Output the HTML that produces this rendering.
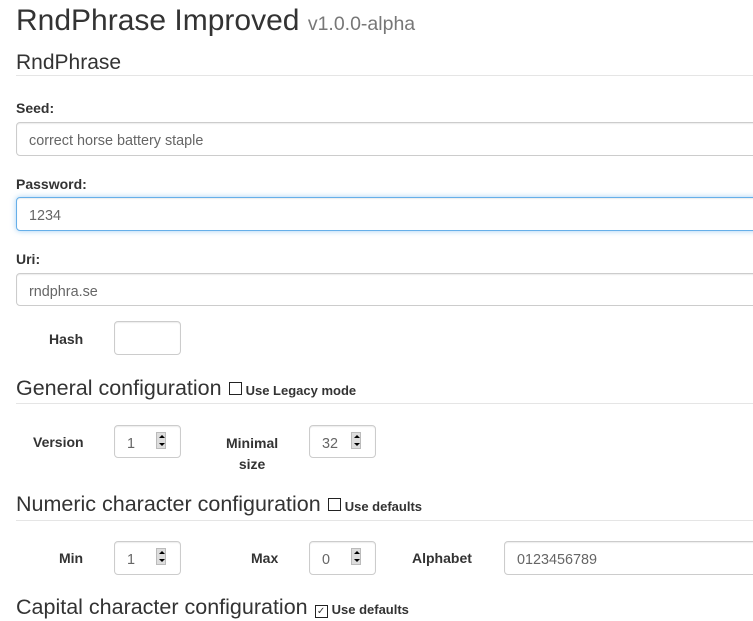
<!DOCTYPE html>
<html><head><meta charset="utf-8"><style>
body{margin:0;width:753px;height:621px;overflow:hidden;background:#fff;font-family:"Liberation Sans",sans-serif;color:#333;position:relative}
.a{position:absolute;white-space:nowrap}
.h1{font-size:30px;line-height:30px;left:16px;top:6px}
.h1 small{font-size:19.5px;color:#777}
.h{font-size:21.5px;line-height:22px;left:16px}
.hr{position:absolute;left:16px;right:0;height:1px;background:#e5e5e5}
.lb{font-weight:bold;font-size:14px}
.in{position:absolute;border:1px solid #ccc;border-radius:4px;box-sizing:border-box;font-size:14.4px;color:#666;padding-left:12px;padding-top:3px;line-height:31px;box-shadow:inset 0 1px 1px rgba(0,0,0,.075);background:#fff}
.cb{display:inline-block;width:11px;height:11px;border:1px solid #222;vertical-align:0px;margin:0 4px 0 7px;font-size:10px;line-height:11px;text-align:center}
.cbl{font-size:13px;font-weight:bold}
.sp{position:absolute;right:14px;top:6px;width:10px;height:17px;background:#ddd;border:1px solid #bbb;box-sizing:border-box}
.sp:before{content:"";position:absolute;left:2px;top:2px;border:3px solid transparent;border-bottom:3px solid #000;border-top:0}
.sp:after{content:"";position:absolute;left:2px;bottom:2px;border:3px solid transparent;border-top:3px solid #000;border-bottom:0}
</style></head><body>
<div class="a h1">RndPhrase Improved <small>v1.0.0-alpha</small></div>
<div class="a h" style="top:52px;font-size:21px">RndPhrase</div>
<div class="hr" style="top:75px"></div>
<div class="a lb" style="left:16px;top:100px">Seed:</div>
<div class="in" style="left:16px;top:122px;width:760px;height:34px">correct horse battery staple</div>
<div class="a lb" style="left:16px;top:176px">Password:</div>
<div class="in" style="left:16px;top:197px;width:760px;height:34px;border-color:#66afe9;box-shadow:inset 0 1px 1px rgba(0,0,0,.075),0 0 6px rgba(102,175,233,.6)">1234</div>
<div class="a lb" style="left:16px;top:251px">Uri:</div>
<div class="in" style="left:16px;top:273px;width:760px;height:33px">rndphra.se</div>
<div class="a lb" style="left:49px;top:331px">Hash</div>
<div class="in" style="left:114px;top:321px;width:67px;height:34px"></div>
<div class="a h" style="top:377px">General configuration<span class="cb"></span><span class="cbl">Use Legacy mode</span></div>
<div class="hr" style="top:403px"></div>
<div class="a lb" style="left:33px;top:434px">Version</div>
<div class="in" style="left:114px;top:425px;width:67px;height:33px">1<span class="sp"></span></div>
<div class="a lb" style="left:226px;top:433px;text-align:center;line-height:21px">Minimal<br>size</div>
<div class="in" style="left:309px;top:425px;width:67px;height:33px">32<span class="sp"></span></div>
<div class="a h" style="top:493px">Numeric character configuration<span class="cb"></span><span class="cbl">Use defaults</span></div>
<div class="hr" style="top:520px"></div>
<div class="a lb" style="left:59px;top:550px">Min</div>
<div class="in" style="left:114px;top:541px;width:67px;height:34px">1<span class="sp"></span></div>
<div class="a lb" style="left:251px;top:550px">Max</div>
<div class="in" style="left:309px;top:541px;width:67px;height:34px">0<span class="sp"></span></div>
<div class="a lb" style="left:412px;top:550px">Alphabet</div>
<div class="in" style="left:504px;top:541px;width:260px;height:34px">0123456789</div>
<div class="a h" style="top:596px">Capital character configuration<span class="cb">✓</span><span class="cbl">Use defaults</span></div>
</body></html>
